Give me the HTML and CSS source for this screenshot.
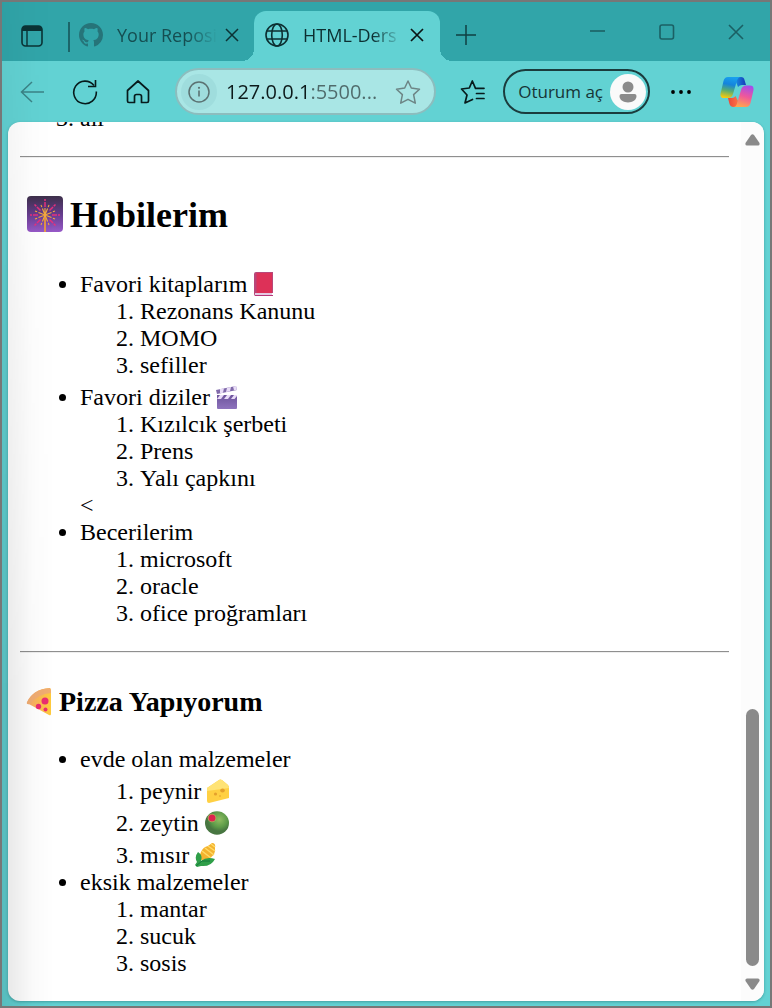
FILE: index.html
```html
<!DOCTYPE html>
<html lang="tr">
<head>
<meta charset="utf-8">
<title>HTML-Dersi</title>
<link rel="stylesheet" href="styles.css">
</head>
<body>
<div class="window">
  <header class="titlebar">
    <button class="icon-btn tab-actions" aria-label="Sekme eylemleri">
      <svg width="22" height="22" viewBox="0 0 22 22"><rect x="1" y="1" width="20" height="20" rx="3.5" fill="none" stroke="#0b3335" stroke-width="1.6"/><path d="M1 6V4.500Q1 1 4.500 1H17.500Q21 1 21 4.500V6Z" fill="#0b3335"/><path d="M6 6V21" stroke="#0b3335" stroke-width="1.4"/></svg>
    </button>
    <div class="tab tab-idle">
      <svg width="24" height="24" viewBox="0 0 16 16" fill="#267479"><path d="M8 0C3.580 0 0 3.580 0 8c0 3.540 2.290 6.530 5.470 7.590.4.070.55-.17.55-.38 0-.19-.01-.82-.01-1.490-2.010.37-2.530-.49-2.690-.94-.09-.23-.48-.94-.82-1.130-.28-.15-.68-.52-.01-.53.63-.01 1.080.58 1.230.82.72 1.210 1.870.87 2.330.66.070-.52.28-.87.51-1.070-1.780-.2-3.640-.89-3.640-3.950 0-.87.31-1.590.82-2.150-.08-.2-.36-1.020.08-2.120 0 0 .67-.21 2.200.82.64-.18 1.320-.27 2-.27s1.360.09 2 .27c1.530-1.040 2.200-.82 2.200-.82.44 1.100.16 1.920.08 2.120.51.56.82 1.270.82 2.150 0 3.070-1.870 3.750-3.650 3.950.29.25.54.73.54 1.480 0 1.070-.01 1.930-.01 2.200 0 .21.15.46.55.38A8.010 8.010 0 0 0 16 8c0-4.420-3.580-8-8-8Z"/></svg>
      <span class="tab-title">Your Reposi</span>
      <button class="icon-btn" aria-label="Sekmeyi kapat"><svg width="14" height="14" viewBox="0 0 14 14"><path d="M1 1 13 13M13 1 1 13" stroke="#0b3335" stroke-width="1.5"/></svg></button>
    </div>
    <div class="tab tab-active">
      <svg width="24" height="24" viewBox="0 0 24 24" fill="none" stroke="#0c2f31" stroke-width="1.6"><circle cx="12" cy="12" r="11"/><ellipse cx="12" cy="12" rx="5.300" ry="11"/><path d="M2 8H22M2 16H22"/></svg>
      <span class="tab-title">HTML-Ders</span>
      <button class="icon-btn" aria-label="Sekmeyi kapat"><svg width="14" height="14" viewBox="0 0 14 14"><path d="M1 1 13 13M13 1 1 13" stroke="#0a1515" stroke-width="1.7"/></svg></button>
    </div>
    <button class="icon-btn new-tab" aria-label="Yeni sekme"><svg width="22" height="22" viewBox="0 0 22 22"><path d="M11 1V21M1 11H21" stroke="#0f3f42" stroke-width="1.500"/></svg></button>
    <div class="controls">
      <button class="icon-btn" aria-label="Simge durumuna küçült"><svg width="16" height="16" viewBox="0 0 16 16"><path d="M0 7H15" stroke="#1b6064" stroke-width="1.600"/></svg></button>
      <button class="icon-btn" aria-label="Ekranı kapla"><svg width="16" height="16" viewBox="0 0 16 16"><rect x="1" y="1" width="13.500" height="14" rx="2" fill="none" stroke="#1b6064" stroke-width="1.600"/></svg></button>
      <button class="icon-btn" aria-label="Kapat"><svg width="16" height="16" viewBox="0 0 16 16"><path d="M1 1 15 15M15 1 1 15" stroke="#1b6064" stroke-width="1.600"/></svg></button>
    </div>
  </header>

  <nav class="toolbar">
    <button class="icon-btn" aria-label="Geri"><svg width="24" height="22" viewBox="0 0 24 22" fill="none" stroke="#3b8386" stroke-width="1.500"><path d="M12 1 1.500 11 12 21M1.500 11H24"/></svg></button>
    <button class="icon-btn" aria-label="Yenile"><svg width="26" height="26" viewBox="0 0 26 26" fill="none" stroke="#071b1c" stroke-width="1.600"><path d="M24.300 12.500A11.300 11.300 0 1 1 22 6.500"/><path d="M23.500 1V7.500H16"/></svg></button>
    <button class="icon-btn" aria-label="Giriş"><svg width="24" height="26" viewBox="0 0 24 26" fill="none" stroke="#071b1c" stroke-width="1.700" stroke-linejoin="round"><path d="M1.500 11.500 12 2 22.500 11.500V22Q22.500 23.500 21 23.500H15.500V17.500Q15.500 15.500 13.500 15.500H10.500Q8.500 15.500 8.500 17.500V23.500H3Q1.500 23.500 1.500 22Z"/></svg></button>
    <form class="address">
      <span class="site-info"><svg width="22" height="22" viewBox="0 0 22 22"><circle cx="11" cy="11" r="10" fill="none" stroke="#5b7272" stroke-width="1.500"/><circle cx="11" cy="6.800" r="1.100" fill="#5b7272"/><path d="M11 9.500V15.500" stroke="#5b7272" stroke-width="1.600"/></svg></span>
      <input class="url" type="text" aria-label="Adres" value="127.0.0.1:5500...">
      <button type="button" class="icon-btn" aria-label="Sık kullanılanlara ekle"><svg width="26" height="26" viewBox="0 0 26 26" fill="none" stroke="#6d8585" stroke-width="1.500" stroke-linejoin="round"><path d="M13 2 16.300 9 24.500 10.200 18.600 15.600 20.300 24.200 13 20.300 5.700 24.200 7.400 15.600 1.500 10.200 9.700 9Z"/></svg></button>
    </form>
    <button class="icon-btn favorites" aria-label="Sık kullanılanlar"><svg width="26" height="26" viewBox="0 0 26 26" fill="none" stroke="#071b1c" stroke-width="1.700" stroke-linejoin="round" stroke-linecap="round"><path d="M24 9.300 15.500 9.300 12.300 2 9.300 9 1.500 10 7 16 5 24 12.500 20.500M16.500 14.500H24M16.500 19.500H24"/></svg></button>
    <button class="signin"><span>Oturum aç</span><svg width="36" height="36" viewBox="0 0 36 36"><circle cx="18" cy="18" r="18" fill="#fafafa"/><circle cx="18" cy="13" r="5.500" fill="#8b8b8b"/><path d="M11.500 20H24.500Q26.500 20 26.500 22C26.500 30.500 9.500 30.500 9.500 22Q9.500 20 11.500 20Z" fill="#8b8b8b"/></svg></button>
    <button class="icon-btn more" aria-label="Ayarlar ve daha fazlası"><svg width="22" height="6" viewBox="0 0 22 6"><circle cx="3" cy="3" r="1.900"/><circle cx="11" cy="3" r="1.900"/><circle cx="19" cy="3" r="1.900"/></svg></button>
    <button class="icon-btn" aria-label="Copilot"><svg width="34" height="32" viewBox="0 0 34 32">
      <defs>
        <linearGradient id="cp1" x1="0.500" y1="0" x2="0.300" y2="1"><stop offset="0" stop-color="#18a0ee"/><stop offset=".35" stop-color="#1584dc"/><stop offset=".65" stop-color="#58ad72"/><stop offset="1" stop-color="#fbcb0b"/></linearGradient>
        <linearGradient id="cp2" x1=".7" y1="0" x2=".4" y2="1"><stop offset="0" stop-color="#a44cec"/><stop offset=".5" stop-color="#ef589b"/><stop offset="1" stop-color="#ffa64d"/></linearGradient>
        <linearGradient id="cp3"><stop offset="0" stop-color="#1789e0"/><stop offset="1" stop-color="#1838b8"/></linearGradient>
        <linearGradient id="cp4"><stop offset="0" stop-color="#e9473c"/><stop offset="1" stop-color="#ff7146"/></linearGradient>
      </defs>
      <path d="M16 1H21Q24 1 24.500 4L26 9H22Q19.500 9 18 11L16 6Z" fill="url(#cp3)"/>
      <path d="M8 22H12Q14.500 22 15.500 20L18 25 17 31H13.500Q10.500 31 9.500 28Z" fill="url(#cp4)"/>
      <path d="M8 1H21Q18 1 17 4.500L13 18Q11.800 22 8 22H4Q-.5 22 .7 17L3.500 5Q4.500 1 8 1Z" fill="url(#cp1)"/>
      <path d="M26 31H13Q16 31 17 27.500L21 14Q22.200 9.500 26 9.500H30Q34.500 9.500 33.300 15L30.500 27Q29.500 31 26 31Z" fill="url(#cp2)"/>
    </svg></button>
  </nav>

  <div class="viewport">
    <main class="page">
      <ol start="3"><li>ali</li></ol>
      <hr>
      <h2><svg class="emoji" width="36" height="36" viewBox="0 0 36 36">
        <defs><linearGradient id="night" x2="0" y2="1"><stop offset="0" stop-color="#3d304a"/><stop offset=".5" stop-color="#653c8c"/><stop offset="1" stop-color="#9759c8"/></linearGradient></defs>
        <rect width="36" height="36" rx="4" fill="url(#night)"/>
        <path d="M18 19V36" stroke="#f5a62d" stroke-width="1.600"/>
        <path d="M18 11V3M13.500 14.500 7.500 8.500M22.500 14.500 28.500 8.500M11 19H3M25 19H33M13.500 23.500 7.500 29.500M22.500 23.500 28.500 29.500" stroke="#e5317d" stroke-width="1.500" stroke-dasharray="5 1"/>
        <path d="M18 19 14 9M18 19 22 9M18 19 8 15M18 19 28 15M18 19 8 23M18 19 28 23M18 19 14 29M18 19 22 29M18 19V12" stroke="#f3a83c" stroke-width="1.100" stroke-dasharray="7 1.500"/>
      </svg>Hobilerim</h2>
      <ul>
        <li class="with-emoji">Favori kitaplarım <svg class="emoji" width="20" height="24" viewBox="0 0 20 24"><path d="M3 0H20V21H3V24H2.500Q1 24 1 22V2Q1 0 3 0Z" fill="#b94779"/><path d="M3.500 1H19V21H3.500Z" fill="#dd3158"/><path d="M2 21H19V23H2Z" fill="#e5c9e2"/><path d="M2 23H20V24H2Z" fill="#b43678"/></svg>
          <ol><li>Rezonans Kanunu</li><li>MOMO</li><li>sefiller</li></ol></li>
        <li class="with-emoji">Favori diziler <svg class="emoji" width="22" height="24" viewBox="0 0 22 24"><defs><linearGradient id="clap" x2="0" y2="1"><stop offset="0" stop-color="#6d549c"/><stop offset="1" stop-color="#8e73bd"/></linearGradient></defs><path d="M1 10H21V23Q21 24 20 24H2Q1 24 1 23Z" fill="url(#clap)"/><path d="M0 5 20 1 21 5 1 9Z" fill="#806aaa"/><path d="M4 4 8 3.300 7 7.700 4 8.300ZM11 2.700 15 2 14 6.200 10 7ZM17 1.500 20 1 21 4.700 18 5.300ZM4 10H8L5 14H1ZM11 10H15L12 14H8ZM18 10H21V11L18.500 14H15Z" fill="#e9ddf7"/></svg>
          <ol><li>Kızılcık şerbeti</li><li>Prens</li><li>Yalı çapkını</li></ol>&lt;</li>
        <li>Becerilerim
          <ol><li>microsoft</li><li>oracle</li><li>ofice proğramları</li></ol></li>
      </ul>
      <hr>
      <h3><svg class="emoji" width="25" height="28" viewBox="0 0 25 28"><defs><linearGradient id="cheese" x2="1"><stop offset="0" stop-color="#f7a86e"/><stop offset="1" stop-color="#ffcb3c"/></linearGradient></defs><path d="M1 15Q7 1 24 0 25 1 25 3V26Q25 28 23 27Z" fill="url(#cheese)"/><path d="M1 14Q7 1 24 0 25 1 25 5 12 6 4 16 0 17 1 14Z" fill="#f1ad72"/><circle cx="19" cy="13" r="3.500" fill="#eb2e70"/><circle cx="12.500" cy="18.500" r="2.700" fill="#eb2e70"/><circle cx="19.500" cy="21.500" r="2" fill="#eb2e70"/></svg>Pizza Yapıyorum</h3>
      <ul>
        <li>evde olan malzemeler
          <ol>
            <li class="with-emoji">peynir <svg class="emoji" width="24" height="24" viewBox="0 0 24 24"><path d="M0 9 12 1Q13 0 15 1L21 6Q22 7 22 9V19L2 24Q0 24 0 22Z" fill="#ffd043"/><path d="M0 9 12 1Q13 0 15 1L21 6 22 9 0 12Z" fill="#ffe375"/><circle cx="8.500" cy="15" r="1.600" fill="#e5a12d"/><ellipse cx="15.500" cy="11.500" rx="2.300" ry="2" fill="#e5a12d"/><circle cx="13" cy="17" r="1" fill="#edb235"/></svg></li>
            <li class="with-emoji olive">zeytin <svg class="emoji" width="24" height="24" viewBox="0 0 24 24"><defs><radialGradient id="olive" cx=".6" cy=".35"><stop offset="0" stop-color="#91bd62"/><stop offset=".65" stop-color="#5d9b49"/><stop offset="1" stop-color="#487641"/></radialGradient></defs><ellipse cx="12" cy="12" rx="12" ry="11.800" fill="url(#olive)"/><circle cx="7" cy="7" r="4.300" fill="#b4b65b"/><circle cx="7" cy="7" r="3.500" fill="#dc244f"/></svg></li>
            <li class="with-emoji">mısır <svg class="emoji" width="21" height="24" viewBox="0 0 21 24"><path d="M17 0Q21 0 20 5 21 11 15 15L9 20 4 14 6 9Q8 4 13 3Z" fill="#f4b32f"/><path d="M7 8 16 15M10 5 19 12M13 3 20 8M16 1 20 4" stroke="#ffdb66" stroke-width="1.500"/><path d="M3 9Q8 12 6 18 12 13 20 16 16 24 6 23L2 24 0 22 2 19Q-1 14 3 9Z" fill="#2f9f49"/><path d="M1 23 7 18 15 18" stroke="#14793d" fill="none"/></svg></li>
          </ol></li>
        <li>eksik malzemeler
          <ol><li>mantar</li><li>sucuk</li><li>sosis</li></ol></li>
      </ul>
    </main>
    <div class="scrollbar" aria-hidden="true">
      <svg width="15" height="12" viewBox="0 0 15 12"><path d="M6 1Q7.500-.5 9 1L14.500 9Q15 11.500 13 11.500H2Q0 11.500.5 9Z" fill="#8a8a8a"/></svg>
      <div class="thumb"></div>
      <svg width="15" height="12" viewBox="0 0 15 12"><path d="M6 11Q7.500 12.500 9 11L14.500 3Q15 .5 13 .5H2Q0 .5.5 3Z" fill="#8a8a8a"/></svg>
    </div>
  </div>
</div>
</body>
</html>
```
FILE: styles.css
```css
* { box-sizing: border-box; }

body { margin: 0; }

.window {
  position: relative;
  display: flex;
  flex-direction: column;
  height: 100vh;
  border: 2px solid #777;
  background: #62d2d3;
  font-family: "Open Sans", "Noto Sans", sans-serif;
  font-size: 18px;
}

/* soft shade along the left edge of the window */
.window::after {
  content: "";
  position: absolute;
  inset: 0 auto 0 0;
  width: 52px;
  background: linear-gradient(90deg, rgba(0, 0, 0, 0.1), rgba(0, 0, 0, 0.02) 60%, transparent);
  mask-image: linear-gradient(rgba(0, 0, 0, 0.3), #000 70%);
  pointer-events: none;
}

.icon-btn {
  display: flex;
  flex: none;
  padding: 0;
  border: 0;
  background: none;
}

svg { flex: none; }

.titlebar {
  display: flex;
  height: 59px;
  background: #31a5a9;
}

.tab-actions {
  align-self: center;
  margin: 8px 25px 0 19px;
}

.tab {
  position: relative;
  display: flex;
  align-items: center;
  margin-top: 9px;
}

.tab-idle {
  width: 186px;
  padding: 0 15px 2px 11px;
  color: #154e51;
}

.tab-idle::before {
  content: "";
  position: absolute;
  left: 0;
  top: 11px;
  width: 2px;
  height: 30px;
  background: #1b6569;
}

.tab-active {
  width: 186px;
  padding: 0 16px 2px 11px;
  border-radius: 12px 12px 0 0;
  background: #62d2d3;
  color: #0c2f31;
}

/* flared feet that join the active tab to the toolbar */
.tab-active::before,
.tab-active::after {
  content: "";
  position: absolute;
  bottom: 0;
  width: 12px;
  height: 12px;
}

.tab-active::before {
  right: 100%;
  background: radial-gradient(circle at 0 0, transparent 12px, #62d2d3 12px);
}

.tab-active::after {
  left: 100%;
  background: radial-gradient(circle at 100% 0, transparent 12px, #62d2d3 12px);
}

.tab-title {
  flex: 1;
  min-width: 0;
  margin: 0 8px 0 14px;
  overflow: hidden;
  white-space: nowrap;
  mask-image: linear-gradient(90deg, #000 70%, transparent);
}

.new-tab {
  align-self: center;
  margin: 6px 0 0 15px;
}

.controls {
  display: flex;
  align-items: center;
  gap: 53px;
  margin-left: auto;
  padding-right: 26px;
}

.toolbar {
  display: flex;
  align-items: center;
  height: 61px;
  padding: 0 16px 0 18px;
  gap: 28px;
}

.address {
  display: flex;
  flex: 1;
  align-items: center;
  min-width: 0;
  height: 47px;
  margin-left: -3px;
  padding: 0 13px 0 4px;
  border: 2px solid #8cbdbe;
  border-radius: 24px;
  background: #a9e6e5;
}

.site-info {
  display: flex;
  align-items: center;
  justify-content: center;
  width: 36px;
  height: 36px;
  border-radius: 50%;
  background: #9fdddd;
}

.url {
  flex: 1;
  min-width: 0;
  margin-left: 9px;
  padding: 0;
  border: 0;
  outline: 0;
  background: linear-gradient(90deg, #0c1a1a 81px, #4f6b6b 81px);
  background-clip: text;
  -webkit-text-fill-color: transparent;
  font: 20px "Open Sans", "Noto Sans", sans-serif;
}

.favorites { margin-left: -4px; }

.signin {
  display: flex;
  flex: none;
  align-items: center;
  gap: 7px;
  height: 45px;
  margin-left: -11px;
  padding: 0 2px 0 13px;
  border: 2px solid #1b3c3d;
  border-radius: 23px;
  background: none;
  color: #163536;
  font: 17px "Open Sans", "Noto Sans", sans-serif;
}

.more { margin-left: -8px; }

.viewport {
  display: flex;
  flex: 1;
  align-items: flex-end;
  min-height: 0;
  margin: 0 6px 5px;
  overflow: hidden;
  border-radius: 12px;
  background: #fff;
  box-shadow: 0 1px 3px rgba(0, 60, 60, 0.35);
}

.page {
  flex: 1;
  padding: 0 12px;
  color: #000;
  font: 24px/27px "Liberation Serif", "Times New Roman", serif;
}

.page hr {
  margin: 0;
  border: solid;
  border-width: 1px 0;
  border-color: #8f8f8f #eee #eee;
}

.page ul,
.page ol {
  margin: 24px 0;
  padding-left: 60px;
}

.page li ol { margin: 0; }

.page h2 {
  margin: 30px 0;
  padding: 7px 0 0 7px;
  font-size: 36px;
  line-height: 41px;
}

.page h3 {
  margin: 28px 0;
  padding: 5px 0 0 6px;
  font-size: 28px;
  line-height: 32px;
}

.page .with-emoji { padding-top: 5px; }

.emoji {
  height: 24px;
  margin: -10px 0 -4px;
  vertical-align: 0;
}

h2 .emoji {
  height: 36px;
  margin-right: 7px;
  vertical-align: -1px;
}

h3 .emoji {
  height: 28px;
  margin-right: 8px;
  vertical-align: -1px;
}

.scrollbar {
  display: flex;
  flex: none;
  flex-direction: column;
  align-items: center;
  align-self: stretch;
  width: 23px;
  padding: 12px 0 11px;
  background: #fcfcfc;
}

.thumb {
  width: 13px;
  height: 30%;
  margin: auto 0 12px;
  border-radius: 7px;
  background: #8a8a8a;
}
```
